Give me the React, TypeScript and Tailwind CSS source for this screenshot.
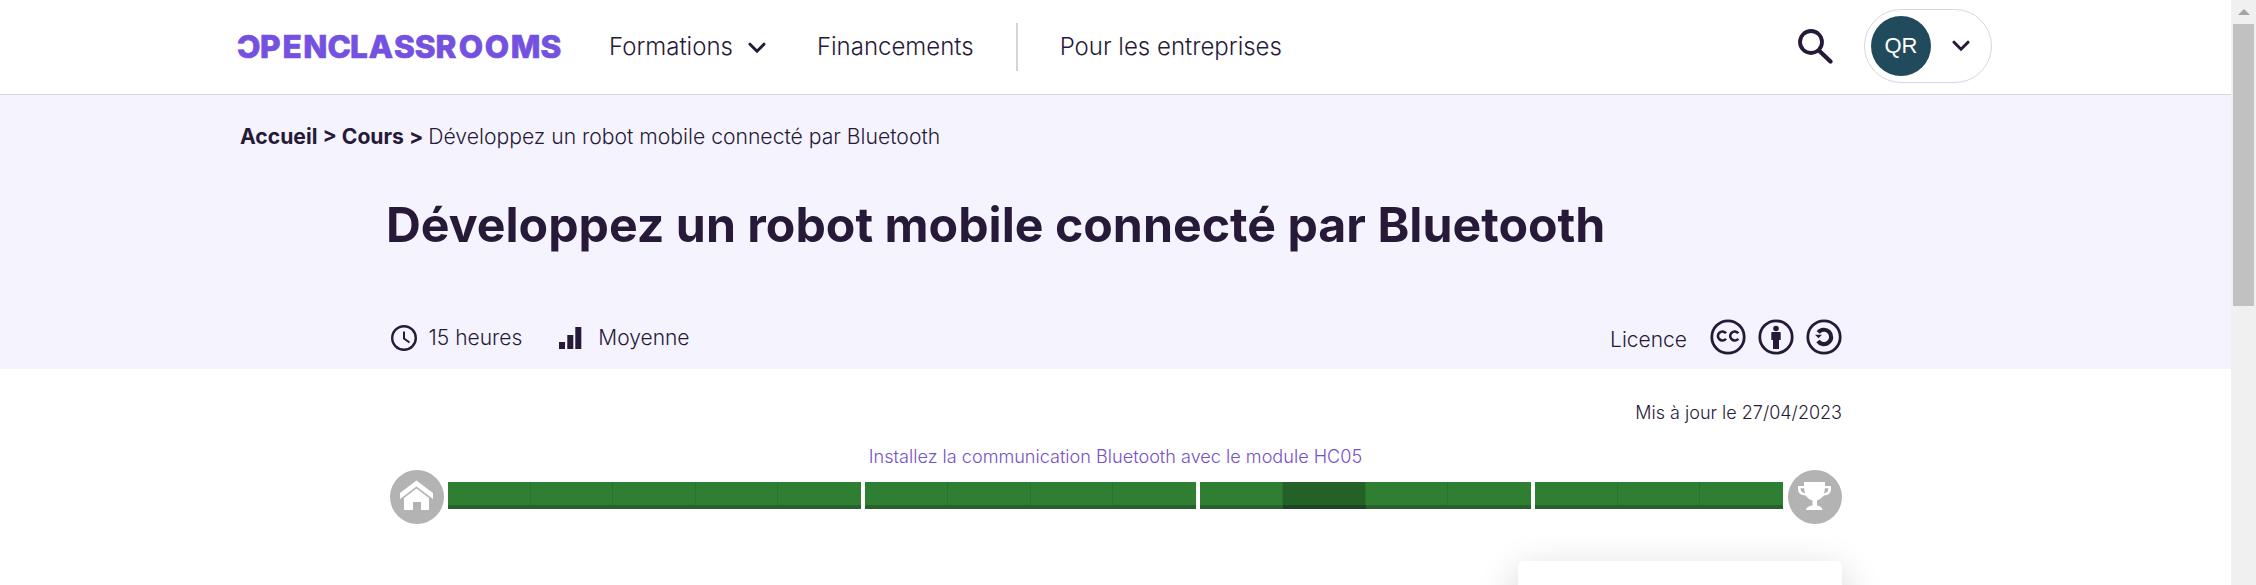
import { ReactNode } from 'react';

const LOGO: { ch: string; x: number }[] = [
  { ch: 'Ɔ', x: -3 },
  { ch: 'P', x: 20 },
  { ch: 'E', x: 42.6 },
  { ch: 'N', x: 63.2 },
  { ch: 'C', x: 87.6 },
  { ch: 'L', x: 110 },
  { ch: 'A', x: 128.7 },
  { ch: 'S', x: 154 },
  { ch: 'S', x: 174.7 },
  { ch: 'R', x: 195.5 },
  { ch: 'O', x: 218.8 },
  { ch: 'O', x: 244.8 },
  { ch: 'M', x: 270.7 },
  { ch: 'S', x: 300.4 },
];

function Logo() {
  return (
    <svg width="322" height="32" viewBox="0 0 322 32" className="shrink-0 overflow-visible" role="img">
      <text
        y="27"
        x={LOGO.map((l) => l.x).join(' ')}
        fill="#7451e0"
        stroke="#7451e0"
        strokeWidth="0.7"
        className="font-['Inter',sans-serif] text-[31.5px] font-extrabold"
      >
        {LOGO.map((l) => l.ch).join('')}
      </text>
    </svg>
  );
}

function Chevron({ className }: { className?: string }) {
  return (
    <svg width="18" height="12" viewBox="0 0 18 12" className={className} fill="none">
      <path d="M2 2.2 9 9.2 16 2.2" stroke="#271a38" strokeWidth="3" strokeLinecap="round" />
    </svg>
  );
}

function Badge({ children }: { children: ReactNode }) {
  return (
    <svg width="36" height="36" viewBox="0 0 36 36">
      <circle cx="18" cy="18" r="16.2" fill="none" stroke="#271a38" strokeWidth="2.8" />
      {children}
    </svg>
  );
}

function Header() {
  return (
    <header className="flex h-[95px] items-center border-b border-[#d8d6df] bg-white pb-px pl-[240px] text-2xl font-light whitespace-nowrap">
      <Logo />
      <span className="ml-[47px]">Formations</span>
      <Chevron className="ml-[15px] mt-[3px]" />
      <span className="ml-[51px]">Financements</span>
      <span className="ml-[42px] h-12 w-0.5 bg-[#d5d5d8]" />
      <span className="ml-[42px]">Pour les entreprises</span>
      <svg width="36" height="36" viewBox="0 0 36 36" className="ml-[516px]" fill="none" stroke="#271a38">
        <circle cx="13" cy="13" r="11" strokeWidth="3.8" />
        <path d="M22 22.5 32.5 32.5" strokeWidth="4.4" strokeLinecap="round" />
      </svg>
      <div className="mb-0.5 ml-[30px] flex h-[74px] w-32 shrink-0 items-center rounded-full border border-[#d8d6df] pl-[6px]">
        <div className="grid h-[60px] w-[60px] place-items-center rounded-full bg-[#214a5c] font-['Liberation_Sans',sans-serif] text-[22px] font-normal text-white">
          QR
        </div>
        <Chevron className="ml-[21px]" />
      </div>
    </header>
  );
}

function CourseHero() {
  return (
    <section className="h-[274px] bg-[#f5f4fe]">
      <nav className="flex h-[84px] items-center pl-[240px] text-[21.15px] whitespace-pre">
        <b>Accueil &gt; Cours &gt; </b>
        <span className="font-light">Développez un robot mobile connecté par Bluetooth</span>
      </nav>
      <h1 className="pl-[386px] pt-4 text-[48.25px] leading-[60px] font-bold">
        Développez un robot mobile connecté par Bluetooth
      </h1>
      <div className="mt-[65px] flex h-9 items-center pl-[391px] text-[21px] font-light">
        <svg width="26" height="26" viewBox="0 0 26 26" fill="none" stroke="#271a38">
          <circle cx="13" cy="13" r="11.8" strokeWidth="2.4" />
          <path d="M13 6.5V13.5L18.5 17.5" strokeWidth="2" />
        </svg>
        <span className="ml-[11.5px]">15 heures</span>
        <svg width="23" height="22" viewBox="0 0 23 22" fill="#271a38" className="ml-[37px]">
          <path d="M0 15H6V22H0ZM8.3 8H14.3V22H8.3ZM16.3 0H22.3V22H16.3Z" />
        </svg>
        <span className="ml-[16px]">Moyenne</span>
        <span className="mr-[23px] mt-1 ml-auto">Licence</span>
        <div className="-mt-0.5 flex gap-3 pr-[389px]">
          <Badge>
            <g fill="none" stroke="#271a38" strokeWidth="2.6">
              <path d="M16 14.3A4.5 4.5 0 1 0 16 19.7M28.3 14.3A4.5 4.5 0 1 0 28.3 19.7" />
            </g>
          </Badge>
          <Badge>
            <circle cx="18" cy="9.5" r="2.8" fill="#271a38" />
            <path d="M14 13H22Q22.7 13 22.7 13.8V21H21V30H15V21H13.3V13.8Q13.3 13 14 13Z" fill="#271a38" />
          </Badge>
          <Badge>
            <path d="M12.3 13.5A7.2 7.2 0 1 1 12 22" fill="none" stroke="#271a38" strokeWidth="4.2" />
            <path d="M9 15.8H16L12.5 19.3Z" fill="#271a38" />
          </Badge>
        </div>
      </div>
    </section>
  );
}

const GROUPS = [
  { parts: 5, width: 'w-[413px]', active: -1 },
  { parts: 4, width: 'w-[331px]', active: -1 },
  { parts: 4, width: 'w-[331px]', active: 1 },
  { parts: 3, width: 'w-[248px]', active: -1 },
];

function Timeline() {
  return (
    <div className="flex items-center pl-[390px]">
      <svg width="54" height="54" viewBox="0 0 54 54">
        <circle cx="27" cy="27" r="27" fill="#b3b3b3" />
        <path d="M26.5 10.5 43 23V29L26.5 16.5 10 29V23Z" fill="#fff" />
        <path d="M26.5 18.5 39 28V40H31V32H23V40H14V28Z" fill="#fff" />
      </svg>
      <div className="ml-1 flex h-[27px] gap-1 -mt-[3px]">
        {GROUPS.map((g, i) => (
          <div key={i} className={`flex ${g.width}`}>
            {Array.from({ length: g.parts }, (_, p) => (
              <div
                key={p}
                className={
                  (p === g.active ? 'border-b-[#1f4424] bg-[#246127]' : 'border-b-[#29612d] bg-[#2e7f32]') +
                  ' flex-1 border-b-4' +
                  (p < g.parts - 1 ? ' shadow-[inset_-1px_0_0_#28732d]' : '')
                }
              />
            ))}
          </div>
        ))}
      </div>
      <svg width="54" height="54" viewBox="0 0 54 54" className="ml-[5px]">
        <circle cx="27" cy="27" r="27" fill="#b3b3b3" />
        <path
          d="M16 12H37V16H43V19Q43 25 36 25.5Q33 29 29 30.5V35.5Q34 36 34.5 40H18Q18.5 36 24.5 35.5V30.5Q20 29 17.5 25.5Q10 25 10 19V16H16Z"
          fill="#fff"
        />
        <path d="M12.5 18.2H16.2Q16 20.7 17.3 23.3Q12.5 22.7 12.5 18.2ZM40.5 18.2H36.8Q37 20.7 35.7 23.3Q40.5 22.7 40.5 18.2Z" fill="#b3b3b3" />
      </svg>
    </div>
  );
}

function Scrollbar() {
  return (
    <div className="flex w-[25px] shrink-0 flex-col items-center bg-[#f0f0f0]">
      <svg width="12" height="6" viewBox="0 0 12 6" className="mt-[9px]">
        <path d="M6 0 12 6H0Z" fill="#a3a3a3" />
      </svg>
      <div className="mt-[9px] h-[282px] w-[21px] bg-[#c1c1c1]" />
    </div>
  );
}

export default function App() {
  return (
    <div className="flex h-[585px] w-[2256px] overflow-hidden bg-white font-['Inter',sans-serif] text-[#271a38]">
      <main className="min-w-0 flex-1">
        <Header />
        <CourseHero />
        <p className="pt-[30px] pr-[389px] text-right text-lg leading-[28px] font-light">Mis à jour le 27/04/2023</p>
        <p className="mt-4 text-center text-[18.1px] leading-[27px] font-light text-[#7451c8]">
          Installez la communication Bluetooth avec le module HC05
        </p>
        <Timeline />
        <div className="mt-[37px] ml-[1518px] h-24 w-[324px] rounded-[5px] bg-white shadow-[0_12px_40px_rgba(0,0,0,0.2)]" />
      </main>
      <Scrollbar />
    </div>
  );
}
